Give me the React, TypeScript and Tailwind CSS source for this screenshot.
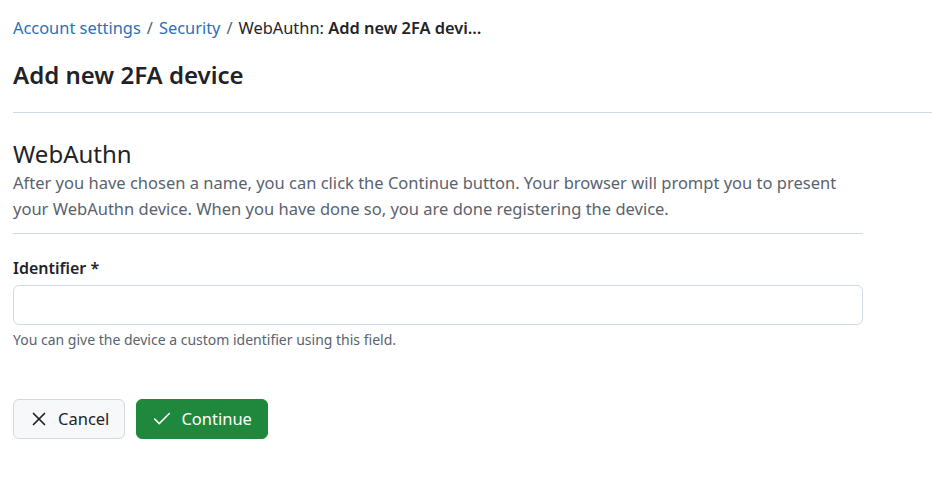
import { X, Check } from "lucide-react";

export default function App() {
  return (
    <div className="min-h-screen bg-white text-[#1f2328] font-['Noto_Sans',sans-serif]">
      <div className="pl-[13px] pt-[14px]">
        {/* Breadcrumb */}
        <nav className="flex items-center gap-[6px] text-[16.4px] leading-[28px] whitespace-nowrap">
          <a className="text-[#2a70b8]" href="#">Account settings</a>
          <span className="text-[#59636e]">/</span>
          <a className="text-[#2a70b8]" href="#">Security</a>
          <span className="text-[#59636e]">/</span>
          <span>
            WebAuthn: <span className="font-semibold">Add new 2FA devi…</span>
          </span>
        </nav>

        <h1 className="mt-[18px] text-[24px] leading-[30px] font-semibold">Add new 2FA device</h1>

        <hr className="mt-[22px] border-t border-[#d1d9e0]" />

        <div className="w-[850px]">
          <h2 className="mt-[25px] text-[24px] leading-[32px] font-normal">WebAuthn</h2>
          <p className="text-[16.5px] leading-[26px] text-[#59636e]">
            After you have chosen a name, you can click the Continue button. Your browser will prompt you to present
            your WebAuthn device. When you have done so, you are done registering the device.
          </p>

          <hr className="mt-[11px] border-t border-[#d1d9e0]" />

          {/* Identifier field */}
          <label className="mt-[22px] block text-[16px] leading-[24px] font-semibold">Identifier *</label>
          <input
            type="text"
            className="mt-[5px] block h-[40px] w-full rounded-[6px] border border-[#d1d9e0] bg-white px-3 text-[16px] outline-none"
          />
          <p className="mt-[5px] text-[14px] leading-[20px] text-[#59636e]">
            You can give the device a custom identifier using this field.
          </p>

          <div className="mt-[49px] flex gap-[11px]">
            <button className="flex h-[40px] items-center gap-[8px] rounded-[6px] border border-[#d1d9e0] bg-[#f6f8fa] pl-[14px] pr-[15px] text-[16.5px] text-[#1f2328]">
              <X className="h-[22px] w-[22px]" strokeWidth={1.9} />
              Cancel
            </button>
            <button className="flex h-[40px] items-center gap-[8px] rounded-[6px] border border-[#1f883d] bg-[#1f883d] pl-[14px] pr-[15px] text-[16.5px] text-white">
              <Check className="h-[22px] w-[22px]" strokeWidth={1.7} />
              Continue
            </button>
          </div>
        </div>
      </div>
    </div>
  );
}
